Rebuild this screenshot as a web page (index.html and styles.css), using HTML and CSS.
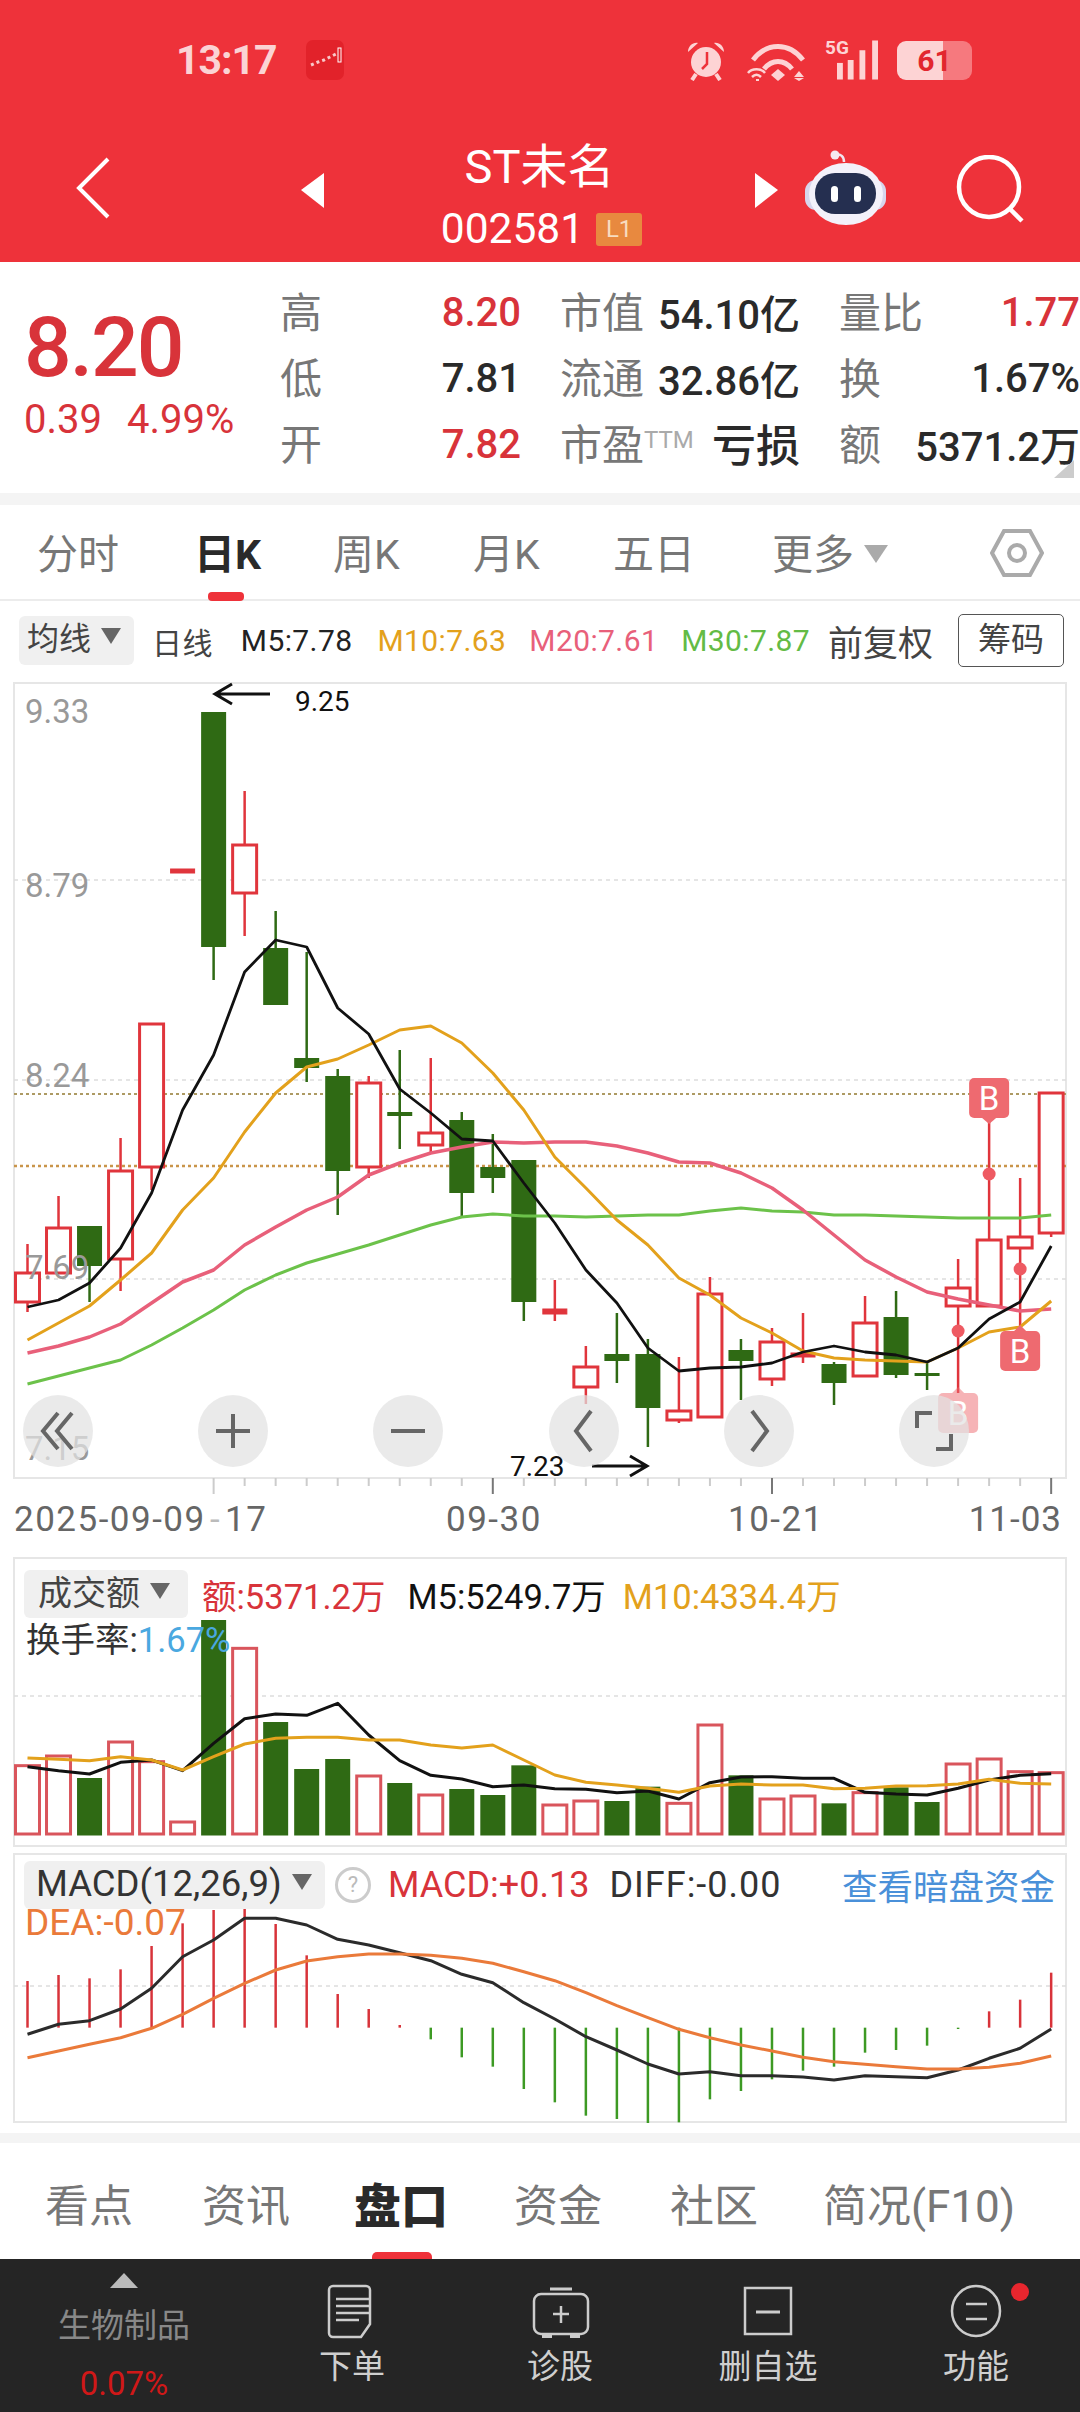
FILE: index.html
```html
<!DOCTYPE html>
<html lang="zh-CN">
<head>
    <meta charset="UTF-8">
    <meta name="viewport" content="width=device-width, initial-scale=1.0">
    <title>ST未名 002581</title>
    <link rel="stylesheet" href="styles.css">
</head>
<body>
    <header class="header">
        <div class="status-bar">
            <span class="clock">13:17</span>
            <svg class="app-icon" viewBox="0 0 38 40">
                <rect width="38" height="40" rx="7" fill="#e2222a"/>
                <path d="M5 25l7-3 6-2 6-3 6-3" stroke="#f9c8c9" stroke-width="3" stroke-dasharray="3 3" fill="none"/>
                <rect x="32" y="8" width="3" height="14" fill="none" stroke="#fff" stroke-width="1"/>
            </svg>
            <div class="status-icons">
                <svg class="ic-alarm" viewBox="0 0 42 42">
                    <circle cx="21" cy="23" r="15" fill="#fdd3d4"/>
                    <path d="M3 13c0-6 5-10 10-9zM39 13c0-6-5-10-10-9z" fill="#fdd3d4"/>
                    <path d="M11 35l-4 6M31 35l4 6" stroke="#fdd3d4" stroke-width="4"/>
                    <path d="M22 13v12l-5 5" stroke="#ee323a" stroke-width="2.5" fill="none"/>
                </svg>
                <svg class="ic-wifi" viewBox="0 0 62 42">
                    <path d="M6 21C20 3 42 3 56 21" stroke="#fdd3d4" stroke-width="5" fill="none"/>
                    <path d="M17 30c8-10 20-10 28 0" stroke="#fdd3d4" stroke-width="5" fill="none"/>
                    <path d="M24 36l7-6 7 6-7 6z" fill="#fdd3d4"/>
                    <path d="M1 34c4-5 13-5 17 0M5 38c3-3 6-3 9 0" stroke="#fdd3d4" stroke-width="2.5" fill="none"/>
                    <path d="M9 40h3v2H9zM52 32l5 6H47zM47 39h10l-5 3z" fill="#fdd3d4"/>
                </svg>
                <div class="signal">
                    <span class="signal-5g">5G</span>
                    <svg class="ic-bars" viewBox="0 0 42 40">
                        <rect x="0" y="23" width="6" height="17" fill="#fdd3d4"/>
                        <rect x="11" y="20" width="6" height="20" fill="#fdd3d4"/>
                        <rect x="23" y="10" width="6" height="30" fill="#fdd3d4"/>
                        <rect x="36" y="0" width="6" height="40" fill="#fdd3d4"/>
                    </svg>
                </div>
                <div class="battery"><span>61</span></div>
            </div>
        </div>
        <div class="nav">
            <svg class="ic-back" viewBox="0 0 34 62"><path d="M32 2L3 31l29 29" stroke="#fff" stroke-width="4" fill="none"/></svg>
            <svg class="ic-tri" viewBox="0 0 23 35"><path d="M23 0v35L0 17z" fill="#fff"/></svg>
            <div class="title">
                <div class="name">ST未名</div>
                <div class="code">002581<span class="badge">L1</span></div>
            </div>
            <svg class="ic-tri" viewBox="0 0 23 35"><path d="M0 0v35l23-18z" fill="#fff"/></svg>
            <svg class="ic-robot" viewBox="0 0 81 75">
                <path d="M30 5c6-2 9 2 9 7" stroke="#f1e4ef" stroke-width="2.5" fill="none"/>
                <circle cx="30" cy="5" r="4.5" fill="#f5e9ef"/>
                <rect x="0" y="30" width="81" height="30" rx="11" fill="#d7d5ec"/>
                <ellipse cx="41" cy="44" rx="37" ry="31" fill="#f3f1fa"/>
                <rect x="10" y="23" width="61" height="41" rx="20" fill="#252f50"/>
                <rect x="26" y="36" width="7" height="16" rx="3.5" fill="#fff"/>
                <rect x="49" y="36" width="7" height="16" rx="3.5" fill="#fff"/>
            </svg>
            <svg class="ic-search" viewBox="0 0 68 68"><circle cx="33" cy="32" r="30" stroke="#fff" stroke-width="4.5" fill="none"/><path d="M53 53l13 13" stroke="#fff" stroke-width="4.5"/></svg>
        </div>
    </header>

    <section class="quote">
        <div class="price-box">
            <div class="price">8.20</div>
            <div class="change"><span>0.39</span><span>4.99%</span></div>
        </div>
        <div class="stats">
            <div class="stat"><span class="label">高</span><span class="value up">8.20</span></div>
            <div class="stat"><span class="label">市值</span><span class="value">54.10亿</span></div>
            <div class="stat"><span class="label">量比</span><span class="value up">1.77</span></div>
            <div class="stat"><span class="label">低</span><span class="value">7.81</span></div>
            <div class="stat"><span class="label">流通</span><span class="value">32.86亿</span></div>
            <div class="stat"><span class="label">换</span><span class="value">1.67%</span></div>
            <div class="stat"><span class="label">开</span><span class="value up">7.82</span></div>
            <div class="stat"><span class="label">市盈<sup class="ttm">TTM</sup></span><span class="value value-loss">亏损</span></div>
            <div class="stat"><span class="label">额</span><span class="value">5371.2万</span></div>
        </div>
        <span class="corner"></span>
    </section>

    <div class="band"></div>

    <nav class="period-tabs">
        <span class="period">分时</span>
        <span class="period active">日K</span>
        <span class="period">周K</span>
        <span class="period">月K</span>
        <span class="period">五日</span>
        <span class="period more">更多<i class="tri tri-large"></i></span>
        <svg class="ic-hex" viewBox="0 0 54 50">
            <path d="M14 3h26l12 22-12 22H14L2 25z" stroke="#aaa" stroke-width="4" fill="none"/>
            <circle cx="27" cy="25" r="8" stroke="#aaa" stroke-width="4" fill="none"/>
        </svg>
    </nav>

    <div class="ma-row">
        <span class="chip ma-chip">均线<i class="tri"></i></span>
        <span class="ma-item">日线</span>
        <span class="ma-item c-black">M5:7.78</span>
        <span class="ma-item c-orange">M10:7.63</span>
        <span class="ma-item c-pink">M20:7.61</span>
        <span class="ma-item c-green">M30:7.87</span>
        <span class="ma-item fq">前复权</span>
        <span class="chip-btn">筹码</span>
    </div>

    <section class="kline">
        <svg id="klineChart" class="chart-svg kline-svg" viewBox="13 682 1054 875"></svg>
        <div class="chart-tools">
            <span class="tool"><svg viewBox="0 0 40 44"><path d="M20 4L5 22l15 18M34 4L19 22l15 18" stroke="#666" stroke-width="4" fill="none"/></svg></span>
            <span class="tool"><svg viewBox="0 0 40 44"><path d="M20 5v34M3 22h34" stroke="#666" stroke-width="4" fill="none"/></svg></span>
            <span class="tool"><svg viewBox="0 0 40 44"><path d="M3 22h34" stroke="#666" stroke-width="4" fill="none"/></svg></span>
            <span class="tool"><svg viewBox="0 0 40 44"><path d="M27 2L12 22l15 20" stroke="#666" stroke-width="4" fill="none"/></svg></span>
            <span class="tool"><svg viewBox="0 0 40 44"><path d="M13 2l15 20-15 20" stroke="#666" stroke-width="4" fill="none"/></svg></span>
            <span class="tool"><svg viewBox="0 0 40 44"><path d="M18 4H3v15M22 40h15V25" stroke="#666" stroke-width="4" fill="none"/></svg></span>
        </div>
    </section>

    <section class="panel vol-panel">
        <svg id="volChart" class="chart-svg vol-svg" viewBox="13 1557 1054 290"></svg>
        <div class="panel-head">
            <div class="panel-line">
                <span class="chip vol-chip">成交额<i class="tri"></i></span>
                <span class="c-red">额:5371.2万</span>
                <span class="c-black">M5:5249.7万</span>
                <span class="c-orange">M10:4334.4万</span>
            </div>
            <div class="panel-sub">换手率:<span class="c-blue">1.67%</span></div>
        </div>
    </section>

    <section class="panel macd-panel">
        <svg id="macdChart" class="chart-svg macd-svg" viewBox="13 1853 1054 270"></svg>
        <div class="panel-head">
            <div class="panel-line">
                <span class="chip macd-chip">MACD(12,26,9)<i class="tri"></i></span>
                <span class="help">?</span>
                <span class="c-red">MACD:+0.13</span>
                <span class="c-dark">DIFF:-0.00</span>
                <span class="dark-pool">查看暗盘资金</span>
            </div>
            <div class="panel-sub c-dea">DEA:-0.07</div>
        </div>
    </section>

    <div class="band band-low"></div>

    <nav class="info-tabs">
        <span class="info-tab">看点</span>
        <span class="info-tab">资讯</span>
        <span class="info-tab active">盘口</span>
        <span class="info-tab">资金</span>
        <span class="info-tab">社区</span>
        <span class="info-tab">简况(F10)</span>
    </nav>

    <footer class="footer">
        <div class="sector">
            <i class="sector-tri"></i>
            <span class="sector-name">生物制品</span>
            <span class="sector-pct">0.07%</span>
        </div>
        <div class="action">
            <svg viewBox="0 0 60 56" class="action-icon">
                <path d="M11 2h33a4 4 0 0 1 4 4v34l-9 13H11a4 4 0 0 1-4-4V6a4 4 0 0 1 4-4z" stroke="#ccc" stroke-width="2.5" fill="none"/>
                <path d="M14 15h33M14 22h33M14 29h33M14 36h23" stroke="#ccc" stroke-width="2.5"/>
            </svg>
            <span>下单</span>
        </div>
        <div class="action">
            <svg viewBox="0 0 60 56" class="action-icon">
                <path d="M20 5h22" stroke="#ccc" stroke-width="3"/>
                <rect x="4" y="10" width="54" height="40" rx="7" stroke="#ccc" stroke-width="2.5" fill="none"/>
                <path d="M31 22v17M23 30h16" stroke="#ccc" stroke-width="2.5"/>
                <path d="M12 50h10v4H12zM40 50h10v4H40z" fill="#ccc"/>
            </svg>
            <span>诊股</span>
        </div>
        <div class="action">
            <svg viewBox="0 0 60 56" class="action-icon">
                <rect x="7" y="4" width="46" height="46" stroke="#ccc" stroke-width="2.5" fill="none"/>
                <path d="M18 28h24" stroke="#ccc" stroke-width="3"/>
            </svg>
            <span>删自选</span>
        </div>
        <div class="action">
            <svg viewBox="0 0 60 56" class="action-icon">
                <ellipse cx="30" cy="27" rx="24" ry="25" stroke="#ccc" stroke-width="2.5" fill="none"/>
                <path d="M20 20h21M20 35h21" stroke="#ccc" stroke-width="2.5"/>
            </svg>
            <span>功能</span>
            <i class="dot"></i>
        </div>
    </footer>

    <script src="chart.js"></script>
</body>
</html>
```

FILE: styles.css
```css
* {
    box-sizing: border-box;
}
html, body {
    margin: 0;
    padding: 0;
}
body {
    width: 1080px;
    height: 2412px;
    overflow: hidden;
    background-color: #fff;
    color: #222;
    font-family: Roboto, "Noto Sans CJK SC", sans-serif;
}

/* red header */
.header {
    height: 262px;
    background-color: #ee323a;
    color: #fff;
}
.status-bar {
    display: flex;
    align-items: center;
    height: 120px;
    padding-left: 176px;
    padding-right: 108px;
}
.clock {
    width: 103px;
    font-size: 41px;
    font-weight: 700;
    letter-spacing: -1px;
    color: #fbd3d4;
    white-space: nowrap;
}
.app-icon {
    width: 38px;
    height: 40px;
    margin-left: 27px;
}
.status-icons {
    display: flex;
    align-items: center;
    margin-left: auto;
}
.ic-alarm {
    width: 42px;
    height: 42px;
}
.ic-wifi {
    width: 62px;
    height: 42px;
    margin-left: 20px;
}
.signal {
    position: relative;
    width: 53px;
    height: 40px;
    margin-left: 16px;
}
.signal-5g {
    position: absolute;
    left: 0;
    top: -4px;
    font-size: 19px;
    font-weight: 700;
    color: #fdd3d4;
}
.ic-bars {
    position: absolute;
    right: 0;
    top: 0;
    width: 41px;
    height: 40px;
}
.battery {
    width: 75px;
    height: 39px;
    margin-left: 19px;
    border-radius: 9px;
    background: linear-gradient(to right, #fdd3d4 62%, #f6797e 62%);
    text-align: center;
    font-size: 30px;
    font-weight: 700;
    line-height: 39px;
    color: #e2262e;
}
.nav {
    display: flex;
    align-items: center;
    height: 142px;
    padding-left: 76px;
}
.ic-back {
    width: 34px;
    height: 62px;
    margin-top: -6px;
}
.ic-tri {
    width: 23px;
    height: 35px;
    margin-top: -2px;
}
.ic-back + .ic-tri {
    margin-left: 191px;
}
.title {
    width: 431px;
    margin-top: 10px;
    text-align: center;
}
.name {
    font-size: 47px;
    line-height: 52px;
}
.code {
    display: flex;
    align-items: center;
    justify-content: center;
    margin-top: 14px;
    font-size: 42.5px;
    line-height: 44px;
}
.badge {
    width: 46px;
    height: 33px;
    margin-left: 12px;
    margin-right: -4px;
    border-radius: 3px;
    background-color: #e8893f;
    color: #f8dcc0;
    font-size: 24px;
    line-height: 33px;
    text-align: center;
}
.ic-robot {
    width: 81px;
    height: 75px;
    margin-left: 27px;
    margin-top: -8px;
}
.ic-search {
    width: 68px;
    height: 68px;
    margin-left: 70px;
    margin-top: -4px;
}

/* price and stats */
.quote {
    position: relative;
    display: flex;
    height: 231px;
    overflow: hidden;
}
.price-box {
    width: 281px;
    padding-left: 24px;
    color: #d8333a;
}
.price {
    margin-top: 41px;
    font-size: 84px;
    font-weight: 500;
    line-height: 90px;
    letter-spacing: -2px;
}
.change {
    display: flex;
    gap: 25px;
    margin-top: 4px;
    font-size: 40px;
    line-height: 46px;
}
.stats {
    display: grid;
    grid-template-columns: 241px 240px 241px;
    grid-auto-rows: 66px;
    column-gap: 39px;
    padding-top: 17px;
}
.stat {
    display: flex;
    align-items: center;
    justify-content: space-between;
}
.label {
    margin-top: -6px;
    font-size: 42px;
    color: #777;
}
.value {
    font-size: 40px;
    font-weight: 500;
    color: #2a2a2a;
}
.value-loss {
    margin-top: -3px;
    font-size: 44px;
}
.value.up {
    color: #d8333a;
}
.ttm {
    font-size: 24px;
    color: #aaa;
    vertical-align: 12px;
    line-height: 0;
}
.corner {
    position: absolute;
    right: 6px;
    bottom: 15px;
    width: 0;
    height: 0;
    border-left: 20px solid transparent;
    border-bottom: 18px solid #ccc;
}
.band {
    height: 12px;
    background-color: #f4f4f4;
}
.band-low {
    height: 10px;
    margin-top: 10px;
}

/* period tabs */
.period-tabs {
    position: relative;
    display: flex;
    align-items: center;
    height: 96px;
    border-bottom: 2px solid #ececec;
}
.period {
    position: absolute;
    top: 24px;
    font-size: 41px;
    line-height: 52px;
    color: #777;
}
.period:nth-child(1) { left: 37px; }
.period:nth-child(2) { left: 194px; }
.period:nth-child(3) { left: 333px; }
.period:nth-child(4) { left: 473px; }
.period:nth-child(5) { left: 613px; }
.period:nth-child(6) { left: 772px; }
.period.active {
    font-weight: 700;
    color: #2a2a2a;
}
.period.active::after {
    content: "";
    position: absolute;
    left: 14px;
    top: 63px;
    width: 36px;
    height: 9px;
    border-radius: 4px;
    background-color: #ee323a;
}
.ic-hex {
    position: absolute;
    left: 990px;
    top: 23px;
    width: 54px;
    height: 50px;
}
.tri {
    display: inline-block;
    width: 0;
    height: 0;
    margin-left: 10px;
    border-left: 10px solid transparent;
    border-right: 10px solid transparent;
    border-top: 16px solid #666;
    vertical-align: 6px;
}
.tri-large {
    border-left-width: 12px;
    border-right-width: 12px;
    border-top-width: 18px;
    border-top-color: #aaa;
}

/* moving average legend */
.ma-row {
    display: flex;
    align-items: center;
    height: 79px;
    padding-left: 19px;
    white-space: nowrap;
}
.ma-row > span {
    flex-shrink: 0;
}
.chip {
    display: inline-block;
    background-color: #f0f0f0;
    border-radius: 6px;
    color: #444;
}
.ma-chip {
    width: 115px;
    height: 49px;
    padding-left: 8px;
    font-size: 32px;
    line-height: 47px;
}
.ma-item {
    font-size: 30px;
    letter-spacing: .4px;
    color: #444;
}
.ma-chip + .ma-item { margin-left: 18px; }
.ma-item.c-black { margin-left: 28px; color: #222; }
.ma-item.c-orange { margin-left: 25px; color: #e3a11c; }
.ma-item.c-pink { margin-left: 23px; color: #e8607a; }
.ma-item.c-green { margin-left: 23px; color: #63bb45; }
.ma-item.fq {
    margin-left: 18px;
    font-size: 35px;
    letter-spacing: 0;
}
.chip-btn {
    width: 106px;
    height: 53px;
    margin-left: 25px;
    border: 1px solid #555;
    border-radius: 5px;
    font-size: 33px;
    line-height: 50px;
    text-align: center;
    color: #444;
}
.c-black { color: #111; }
.c-dark { color: #333; }
.c-orange { color: #e3a11c; }
.c-red { color: #d8333a; }
.c-blue { color: #4aa8e0; }

/* charts */
.chart-svg {
    display: block;
    margin-left: 13px;
    width: 1054px;
}
.kline {
    position: relative;
    height: 875px;
    margin-top: 2px;
}
.kline-svg {
    height: 875px;
}
.chart-tools {
    position: absolute;
    left: 23px;
    top: 713px;
    display: flex;
    justify-content: space-between;
    width: 946px;
}
.tool {
    display: flex;
    align-items: center;
    justify-content: center;
    width: 70px;
    height: 72px;
    border-radius: 50%;
    background-color: rgba(226, 226, 226, .72);
}
.tool svg {
    width: 40px;
    height: 44px;
}
.axis-price {
    font-size: 33px;
    fill: #999;
}
.axis-time {
    font-size: 35px;
    fill: #666;
    letter-spacing: 1.5px;
}
.axis-fade {
    fill: #bbb;
}
.axis-end {
    letter-spacing: 1px;
    text-anchor: end;
}
.note {
    font-size: 28px;
    fill: #111;
}
.b-mark {
    font-size: 33px;
    fill: #fff;
    text-anchor: middle;
}
.panel {
    position: relative;
}
.vol-panel {
    height: 296px;
}
.vol-svg {
    height: 290px;
}
.macd-panel {
    height: 270px;
}
.macd-svg {
    height: 270px;
}
.panel-head {
    position: absolute;
    left: 24px;
    top: 0;
    width: 1043px;
    font-size: 34.5px;
    white-space: nowrap;
}
.panel-line {
    display: flex;
    align-items: center;
}
.vol-panel .panel-head {
    top: 12px;
}
.vol-panel .panel-line {
    gap: 22px;
}
.vol-panel .c-red {
    margin-left: 2px;
}
.vol-panel .c-orange {
    margin-left: -5px;
}
.vol-chip {
    width: 164px;
    height: 48px;
    padding-left: 14px;
    margin-right: -10px;
    font-size: 34px;
    line-height: 46px;
}
.panel-sub {
    margin-left: 2px;
    line-height: 42px;
    color: #333;
}
.macd-panel .panel-head {
    top: 6px;
}
.macd-chip {
    width: 301px;
    height: 48px;
    padding-left: 12px;
    font-size: 36.5px;
    line-height: 46px;
    color: #333;
}
.macd-panel .c-red { margin-left: 17px; font-size: 36px; }
.macd-panel .c-dark { margin-left: 20px; font-size: 36px; letter-spacing: 1px; }
.help {
    width: 36px;
    height: 36px;
    margin-left: 10px;
    border: 3px solid #ccc;
    border-radius: 50%;
    font-size: 22px;
    line-height: 30px;
    text-align: center;
    color: #bbb;
}
.dark-pool {
    margin-left: auto;
    margin-right: 12px;
    font-size: 35.5px;
    color: #4a90d9;
}
.c-dea.panel-sub {
    font-size: 37px;
    margin-top: -8px;
    margin-left: 1px;
    color: #ea7a3a;
}

/* bottom tabs */
.info-tabs {
    position: relative;
    height: 116px;
}
.info-tab {
    position: absolute;
    top: 36px;
    font-size: 44px;
    line-height: 56px;
    color: #777;
}
.info-tab:nth-child(1) { left: 45px; }
.info-tab:nth-child(2) { left: 202px; }
.info-tab:nth-child(3) { left: 354px; }
.info-tab:nth-child(4) { left: 514px; }
.info-tab:nth-child(5) { left: 670px; }
.info-tab:nth-child(6) { left: 823px; }
.info-tab.active {
    font-weight: 900;
    font-size: 47px;
    color: #2a2a2a;
}
.info-tab.active::after {
    content: "";
    position: absolute;
    left: 18px;
    top: 73px;
    width: 60px;
    height: 7px;
    border-radius: 5px 5px 0 0;
    background-color: #ee323a;
}

/* dark footer */
.footer {
    display: grid;
    grid-template-columns: 248px repeat(4, 208px);
    height: 153px;
    background-color: #252525;
}
.sector {
    display: flex;
    flex-direction: column;
    align-items: center;
}
.sector-tri {
    width: 0;
    height: 0;
    margin-top: 14px;
    border-left: 14px solid transparent;
    border-right: 14px solid transparent;
    border-bottom: 15px solid #bbb;
}
.sector-name {
    margin-top: 16px;
    font-size: 33px;
    line-height: 44px;
    color: #888;
}
.sector-pct {
    margin-top: 14px;
    font-size: 33px;
    line-height: 44px;
    color: #d01818;
}
.action {
    position: relative;
    display: flex;
    flex-direction: column;
    align-items: center;
    padding-top: 25px;
    font-size: 33px;
    line-height: 44px;
    color: #cfcfcf;
}
.action-icon {
    width: 60px;
    height: 56px;
    margin-bottom: 5px;
}
.dot {
    position: absolute;
    left: 139px;
    top: 24px;
    width: 18px;
    height: 18px;
    border-radius: 50%;
    background-color: #e8262e;
}
```

FILE: chart.js
```js
// colours
var RED = '#e0353c';
var GREEN = '#2f6a14';
var NS = 'http://www.w3.org/2000/svg';

function xAt(i) {
    return 27.5 + 31.02 * i;
}

function add(svg, tag, attrs, text) {
    var el = document.createElementNS(NS, tag);
    for (var k in attrs) {
        el.setAttribute(k, attrs[k]);
    }
    if (text) {
        el.textContent = text;
    }
    svg.appendChild(el);
    return el;
}

function line(svg, x1, y1, x2, y2, color, width, dash) {
    var attrs = { x1: x1, y1: y1, x2: x2, y2: y2, stroke: color, 'stroke-width': width };
    if (dash) {
        attrs['stroke-dasharray'] = dash;
    }
    add(svg, 'line', attrs);
}

function polyline(svg, ys, color, width) {
    var pts = [];
    for (var i = 0; i < ys.length; i++) {
        pts.push(xAt(i).toFixed(1) + ',' + ys[i].toFixed(1));
    }
    add(svg, 'polyline', { points: pts.join(' '), fill: 'none', stroke: color, 'stroke-width': width, 'stroke-linejoin': 'round' });
}

function frame(svg, x, y, w, h) {
    add(svg, 'rect', { x: x, y: y, width: w, height: h, fill: 'none', stroke: '#e6e6e6', 'stroke-width': 2 });
}

/* ---------- K line ---------- */
// [up?, wick top, body top, body bottom, wick bottom]
var candles = [
    [1, 1244, 1273, 1302, 1312], [1, 1196, 1228, 1273, 1273], [0, 1226, 1226, 1266, 1302],
    [1, 1138, 1171, 1259, 1291], [1, 1024, 1024, 1167, 1190], [1, 869, 869, 873, 873],
    [0, 712, 712, 947, 980], [1, 791, 845, 893, 936], [0, 911, 948, 1005, 1005],
    [0, 952, 1058, 1068, 1082], [0, 1069, 1076, 1171, 1215], [1, 1076, 1083, 1167, 1178],
    [0, 1050, 1112, 1116, 1149], [1, 1058, 1133, 1145, 1153], [0, 1112, 1120, 1193, 1217],
    [0, 1134, 1167, 1178, 1193], [0, 1160, 1160, 1302, 1321], [1, 1280, 1309, 1314, 1321],
    [1, 1346, 1367, 1387, 1404], [0, 1313, 1354, 1361, 1383], [0, 1339, 1354, 1408, 1447],
    [1, 1357, 1411, 1420, 1423], [1, 1277, 1294, 1417, 1417], [0, 1339, 1350, 1361, 1400],
    [1, 1328, 1342, 1379, 1386], [1, 1313, 1353, 1357, 1363], [0, 1362, 1364, 1383, 1405],
    [1, 1296, 1323, 1376, 1376], [0, 1291, 1317, 1375, 1378], [0, 1362, 1373, 1375, 1390],
    [1, 1259, 1288, 1306, 1306], [1, 1240, 1240, 1306, 1306], [1, 1178, 1237, 1248, 1327],
    [1, 1093, 1093, 1233, 1237]
];
var ma5 = [1307, 1300, 1283, 1248, 1193, 1110, 1055, 972, 940, 947, 1008, 1034, 1089, 1113, 1139, 1141, 1183, 1223, 1270, 1303, 1348, 1371, 1368, 1367, 1363, 1352, 1346, 1352, 1355, 1362, 1348, 1319, 1302, 1246];
var ma10 = [1340, 1323, 1306, 1280, 1253, 1210, 1178, 1132, 1093, 1067, 1059, 1045, 1030, 1026, 1043, 1073, 1110, 1157, 1188, 1220, 1245, 1278, 1295, 1318, 1333, 1351, 1358, 1360, 1361, 1362, 1348, 1332, 1327, 1301];
var ma20 = [1353, 1346, 1337, 1324, 1303, 1282, 1270, 1245, 1227, 1210, 1197, 1175, 1163, 1153, 1147, 1142, 1143, 1142, 1142, 1146, 1153, 1162, 1163, 1173, 1188, 1210, 1235, 1260, 1277, 1292, 1299, 1305, 1311, 1309];
var ma30 = [1384, 1376, 1368, 1360, 1345, 1328, 1310, 1290, 1275, 1263, 1254, 1245, 1235, 1225, 1217, 1214, 1216, 1216, 1217, 1216, 1215, 1215, 1211, 1208, 1211, 1212, 1215, 1215, 1216, 1217, 1218, 1218, 1218, 1215];

function drawKline(svg) {
    frame(svg, 14, 683, 1052, 795);

    // price grid
    [880, 1080, 1279].forEach(function(y) {
        line(svg, 14, y, 1066, y, '#ddd', 1.5, '4 4');
    });
    line(svg, 14, 1094, 1066, 1094, '#ad9a63', 2, '3 3');
    line(svg, 14, 1166, 1066, 1166, '#c9954a', 2.5, '3 3');

    // bottom ticks
    for (var t = 6; t < 34; t++) {
        var major = t === 6 || t === 15 || t === 24 || t === 33;
        line(svg, xAt(t), 1478, xAt(t), major ? 1494 : 1486, (major && t !== 6) ? '#777' : '#ccc', 2);
    }

    // B marker stems sit behind the candles
    line(svg, xAt(31), 1119, xAt(31), 1240, RED, 2.5);
    line(svg, xAt(30), 1306, xAt(30), 1393, RED, 2.5);

    candles.forEach(function(c, i) {
        var x = xAt(i);
        var color = c[0] ? RED : GREEN;
        line(svg, x, c[1], x, c[4], color, 2.5);
        if (c[0]) {
            var thin = c[3] - c[2] < 6;
            add(svg, 'rect', {
                x: x - 12, y: c[2], width: 24, height: c[3] - c[2],
                fill: thin ? RED : '#fff', stroke: RED, 'stroke-width': thin ? 1 : 3
            });
        } else {
            add(svg, 'rect', { x: x - 12.5, y: c[2], width: 25, height: Math.max(c[3] - c[2], 3), fill: color });
        }
    });

    polyline(svg, ma30, '#6cc24a', 3);
    polyline(svg, ma20, '#e8607a', 3.5);
    polyline(svg, ma10, '#e3a11c', 3);
    polyline(svg, ma5, '#111', 2.8);

    // dots on the stems
    add(svg, 'ellipse', { cx: xAt(31), cy: 1174, rx: 6.5, ry: 6.5, fill: '#ee5a62' });
    add(svg, 'ellipse', { cx: xAt(32), cy: 1269, rx: 6.5, ry: 6.5, fill: '#ee5a62' });
    add(svg, 'ellipse', { cx: xAt(30), cy: 1331, rx: 6.5, ry: 6.5, fill: '#ee5a62' });

    // B markers
    drawMark(svg, xAt(31), 1078, 1, 1);
    drawMark(svg, xAt(32), 1331, -1, 1);
    drawMark(svg, xAt(30), 1393, -1, .5);

    // price labels
    [[9.33, 723], [8.79, 897], [8.24, 1087], [7.69, 1279], [7.15, 1460]].forEach(function(p) {
        add(svg, 'text', { x: 25, y: p[1], 'class': 'axis-price' }, p[0].toFixed(2));
    });

    // hand drawn notes
    add(svg, 'path', { d: 'M270 694H215M232 684l-17 10 17 10', fill: 'none', stroke: '#111', 'stroke-width': 3 });
    add(svg, 'text', { x: 295, y: 711, 'class': 'note' }, '9.25');
    add(svg, 'path', { d: 'M592 1466H646M630 1456l17 10-17 10', fill: 'none', stroke: '#111', 'stroke-width': 3 });
    add(svg, 'text', { x: 510, y: 1476, 'class': 'note' }, '7.23');

    // dates
    add(svg, 'text', { x: 14, y: 1531, 'class': 'axis-time' }, '2025-09-09');
    add(svg, 'text', { x: 210, y: 1531, 'class': 'axis-time axis-fade' }, '-');
    add(svg, 'text', { x: 225, y: 1531, 'class': 'axis-time' }, '17');
    add(svg, 'text', { x: 446, y: 1531, 'class': 'axis-time' }, '09-30');
    add(svg, 'text', { x: 728, y: 1531, 'class': 'axis-time' }, '10-21');
    add(svg, 'text', { x: 1062, y: 1531, 'class': 'axis-time axis-end' }, '11-03');
}

// dir 1: tip points down, -1: tip points up
function drawMark(svg, cx, top, dir, opacity) {
    var g = add(svg, 'g', { opacity: opacity });
    var tipY = dir === 1 ? top + 46 : top - 6;
    var baseY = dir === 1 ? top + 40 : top + 1;
    add(g, 'path', { d: 'M' + (cx - 7) + ' ' + baseY + 'L' + cx + ' ' + tipY + 'L' + (cx + 7) + ' ' + baseY + 'Z', fill: '#ee6a70' });
    add(g, 'rect', { x: cx - 20, y: top, width: 40, height: 40, rx: 5, fill: '#ee6a70' });
    add(g, 'text', { x: cx, y: top + 32, 'class': 'b-mark' }, 'B');
}

/* ---------- volume ---------- */
// values read as 3x offsets from y=1540
var volTops = [677, 648, 714, 606, 665, 846, 240, 325, 546, 687, 657, 708, 729, 765, 747, 765, 676, 795, 783, 783, 740, 790, 555, 706, 777, 768, 790, 758, 742, 786, 672, 657, 695, 698];
var volUp = [1, 1, 0, 1, 1, 1, 0, 1, 0, 0, 0, 1, 0, 1, 0, 0, 0, 1, 1, 0, 0, 1, 1, 0, 1, 1, 0, 1, 0, 0, 1, 1, 1, 1];
var volM5 = [680, 692, 702, 667, 660, 692, 610, 536, 522, 526, 490, 585, 662, 706, 717, 740, 735, 746, 748, 758, 753, 777, 728, 711, 710, 715, 715, 757, 762, 765, 745, 720, 706, 701];
var volM10 = [654, 658, 662, 650, 660, 690, 650, 612, 595, 592, 592, 600, 600, 615, 624, 615, 660, 705, 727, 735, 745, 757, 738, 732, 735, 735, 746, 745, 738, 737, 732, 718, 730, 732];

function volY(v) {
    return 1540 + v / 3;
}

function drawVol(svg) {
    frame(svg, 14, 1558, 1052, 288);
    line(svg, 14, 1696, 1066, 1696, '#ddd', 1.5, '4 4');
    volTops.forEach(function(v, i) {
        var x = xAt(i);
        var top = volY(v);
        if (volUp[i]) {
            add(svg, 'rect', { x: x - 12, y: top, width: 24, height: 1834 - top, fill: '#fff', stroke: '#d9555c', 'stroke-width': 3 });
        } else {
            add(svg, 'rect', { x: x - 12.5, y: top, width: 25, height: 1835.5 - top, fill: GREEN });
        }
    });
    polyline(svg, volM5.map(volY), '#111', 3);
    polyline(svg, volM10.map(volY), '#e3a11c', 3);
}

/* ---------- MACD ---------- */
var macdBars = [393, 375, 385, 358, 288, 220, 180, 155, 222, 316, 432, 477, 525, 568, 622, 650, 717, 757, 797, 807, 820, 817, 748, 723, 688, 662, 650, 608, 600, 587, 537, 484, 449, 368];
var diffLine = [553, 523, 512, 477, 415, 320, 270, 205, 205, 225, 268, 285, 308, 332, 373, 398, 458, 507, 560, 600, 642, 672, 665, 677, 677, 681, 690, 677, 680, 683, 660, 625, 595, 537];
var deaLine = [623, 603, 583, 563, 535, 493, 445, 400, 360, 333, 320, 312, 312, 316, 325, 340, 365, 392, 428, 467, 503, 538, 563, 585, 603, 622, 635, 643, 650, 657, 657, 652, 640, 618];

function macdY(v) {
    return 1850 + v / 3;
}

function drawMacd(svg) {
    frame(svg, 14, 1854, 1052, 268);
    line(svg, 14, 1986, 1066, 1986, '#ddd', 1.5, '4 4');
    var zero = macdY(533);
    macdBars.forEach(function(v, i) {
        var x = xAt(i);
        line(svg, x, zero, x, macdY(v), v < 533 ? '#d8333a' : '#3d9a24', 2.5);
    });
    polyline(svg, diffLine.map(macdY), '#2b2b2b', 3);
    polyline(svg, deaLine.map(macdY), '#ea7a3a', 3);
}

drawKline(document.getElementById('klineChart'));
drawVol(document.getElementById('volChart'));
drawMacd(document.getElementById('macdChart'));
```
